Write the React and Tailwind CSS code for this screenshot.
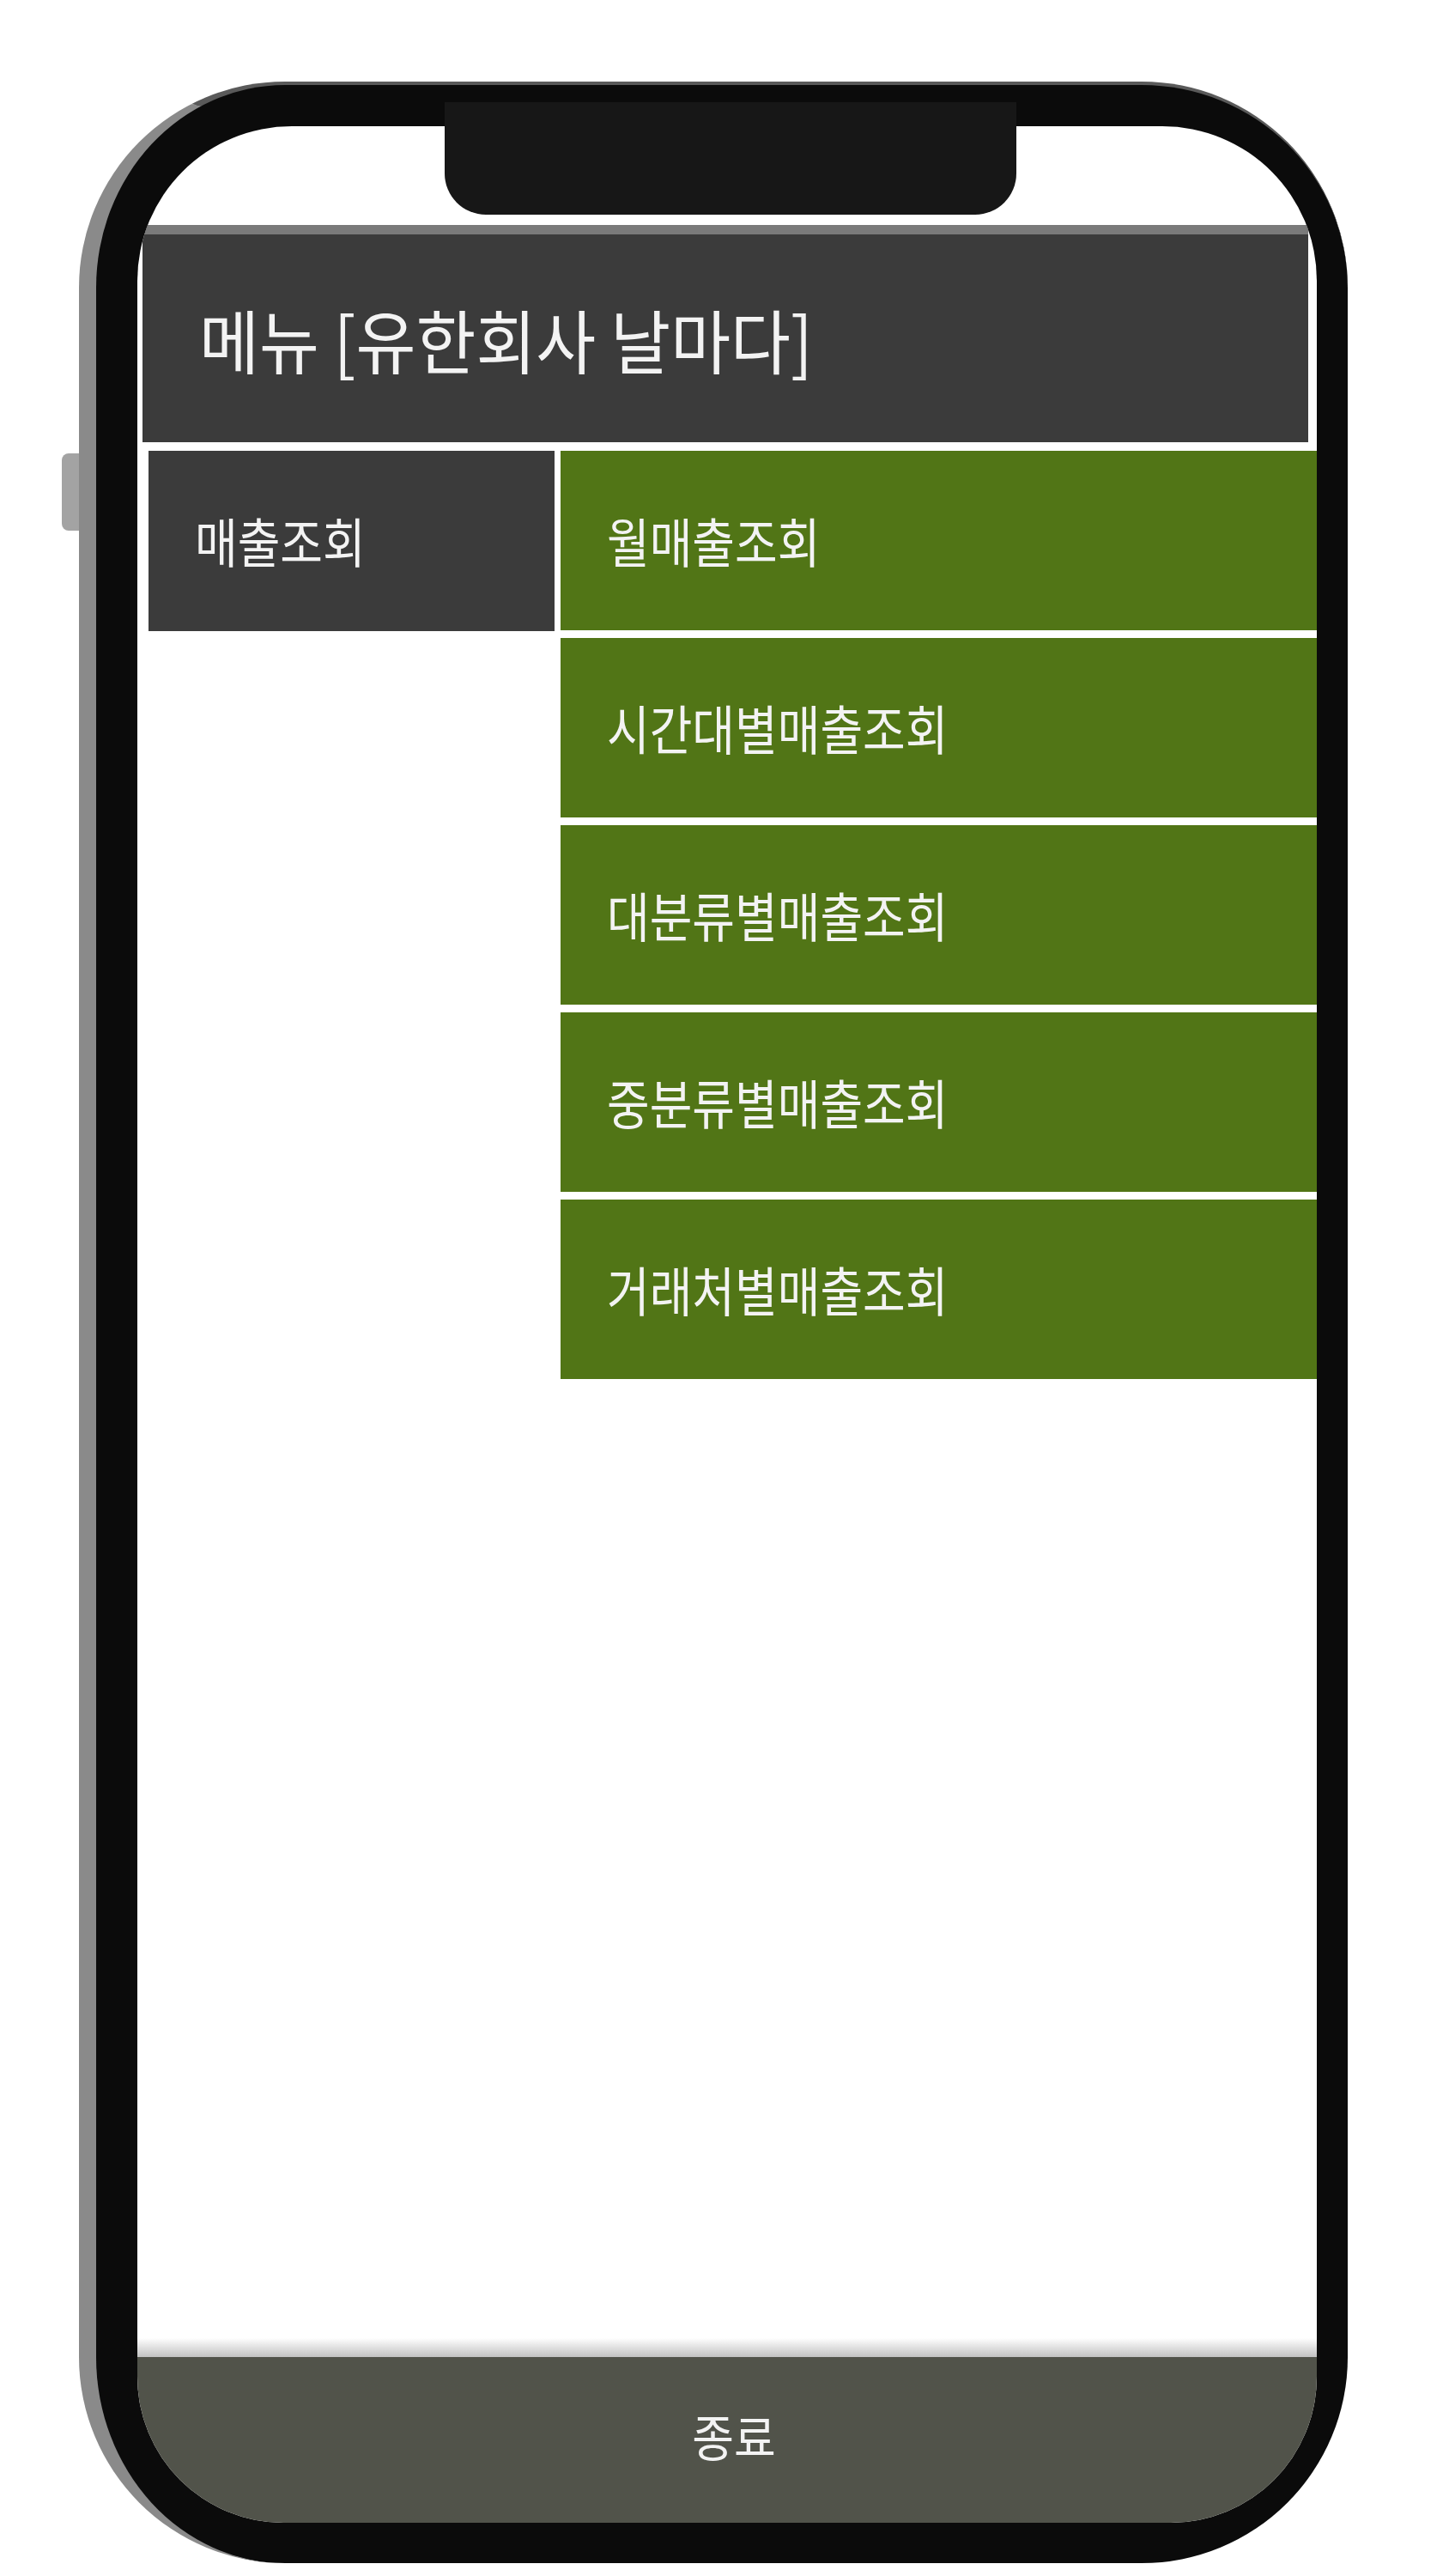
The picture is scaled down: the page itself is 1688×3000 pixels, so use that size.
export default function App() {
  const items = [
    "월매출조회",
    "시간대별매출조회",
    "대분류별매출조회",
    "중분류별매출조회",
    "거래처별매출조회",
  ];

  return (
    <div
      className="relative w-[1688px] h-[3000px] overflow-hidden bg-white"
      style={{ fontFamily: '"Noto Sans CJK KR", "Noto Sans", sans-serif' }}
    >
      {/* side button */}
      <div className="absolute left-[72px] top-[528px] h-[90px] w-[24px] rounded-l-lg bg-[#a3a3a3]" />

      {/* phone frame */}
      <div className="relative ml-[92px] mt-[95px] flex h-[2890px] w-[1478px] rounded-[240px] border-l-[20px] border-t-[4px] border-l-[#8a8a8a] border-t-[#5a5a5a] bg-[#0b0b0b] pb-[47px] pl-[48px] pr-[36px] pt-[48px]">
        {/* notch */}
        <div className="absolute left-[406px] top-[20px] z-10 h-[131px] w-[666px] rounded-b-[48px] bg-[#171717]" />

        {/* screen */}
        <div className="flex flex-1 flex-col overflow-hidden rounded-t-[180px] rounded-b-[170px] bg-white pt-[115px] text-[#f3f3f3]">
          <div className="ml-[6px] mr-[10px] flex h-[253px] items-center border-t-[11px] border-[#7a7a7a] bg-[#3b3b3b] pl-[66px]">
            <span className="inline-block scale-y-[1.06] text-[76px] leading-none">메뉴 [유한회사 날마다]</span>
          </div>

          <div className="mt-[10px] flex gap-[7px] pl-[13px]">
            <div className="flex h-[210px] w-[473px] items-center bg-[#3b3b3b] pl-[54px]">
              <span className="inline-block scale-y-[1.15] text-[54px] leading-none">매출조회</span>
            </div>
            <div className="flex flex-1 flex-col gap-[9px]">
              {items.map((t) => (
                <div key={t} className="flex h-[209px] items-center bg-[#517516] pl-[54px]">
                  <span className="inline-block scale-y-[1.15] text-[54px] leading-none">{t}</span>
                </div>
              ))}
            </div>
          </div>

          <div className="flex-1" />
          <div className="h-[22px] bg-linear-to-b from-white to-[#c2c2c2]" />
          <div className="flex h-[193px] items-center justify-center bg-[#51534a] pl-[16px] pb-[10px]">
            <span className="inline-block scale-y-[1.1] text-[53px] leading-none">종료</span>
          </div>
        </div>
      </div>
    </div>
  );
}
